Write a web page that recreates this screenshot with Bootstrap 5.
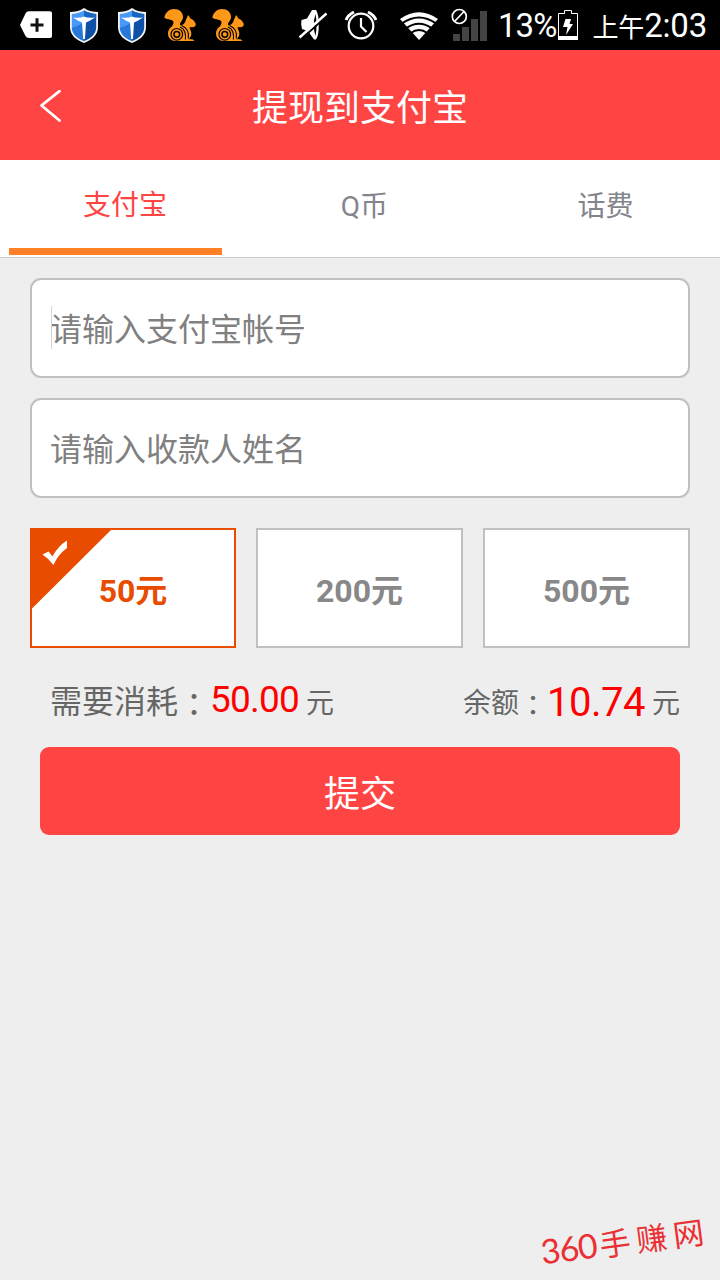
<!DOCTYPE html>
<html lang="zh-CN">
<head>
<meta charset="utf-8">
<meta name="viewport" content="width=device-width, initial-scale=1">
<title>提现到支付宝</title>
<link href="https://cdn.jsdelivr.net/npm/bootstrap@5.3.0/dist/css/bootstrap.min.css" rel="stylesheet">
<script src="https://cdn.jsdelivr.net/npm/bootstrap@5.3.0/dist/js/bootstrap.bundle.min.js"></script>
<style>
  body { font-family: Roboto, "Noto Sans CJK SC", sans-serif; background: #eee; color: #666; line-height: 1; }
  .screen { width: 720px; height: 1280px; overflow: hidden; }
  svg { display: block; flex: none; }
  .status-bar { height: 50px; background: #000; color: #fff; font-size: 33px; padding-left: 12px; white-space: nowrap; }
  .status-bar .battery-text { letter-spacing: -.9px; }
  .status-bar .clock { margin-right: 13px; letter-spacing: -.2px; }
  .ampm { font-size: 26px; }
  .app-header { height: 110px; background: #ff4444; color: #fff; }
  .app-header h1 { font-size: 36px; line-height: 40px; padding-top: 7px; }
  .back-btn { left: 38px; top: 38px; }
  .tabs { height: 98px; background: #fff; border-bottom: 1px solid #ccc; }
  .tabs .tab-item { height: 95px; color: #84848c; font-size: 28px; line-height: 94px; text-align: center; border-bottom: 7px solid transparent; border-radius: 0; padding: 0; }
  .tabs .tab-item.active { color: #ff4444; border-bottom-color: #ff7f27; line-height: 92px; padding-left: 19px; }
  .tabs .tab-cell { padding: 0 9px; }
  .tabs .narrow { width: 231px; }
  .tabs .wide { width: 267px; }
  .tabs .last { width: 222px; padding-left: 2px; }
  .account-form { padding: 20px 30px 0; }
  .field-wrap { margin-bottom: 20px; }
  .field { height: 100px; border: 2px solid #c0c0c0; border-radius: 11px; background: #fff; padding: 4px 19px 0 18px; font-size: 32px; }
  .field::placeholder { color: #808080; opacity: 1; }
  .caret-line { top: 28px; left: 21px; width: 1px; height: 43px; background: #d4d4d4; }
  .amounts { margin-top: 30px; gap: 20px; }
  .amounts .amount { flex: none; width: 207px; height: 120px; border: 2px solid #c0c0c0; background: #fff; color: #888; font-size: 32px; font-weight: 700; border-radius: 0; padding: 5px 0 0; }
  .amounts .amount.active { width: 206px; background: #fff; border-color: #e84c00; color: #e84c00; }
  .corner { left: -2px; top: -2px; }
  .summary { height: 99px; padding: 0 10px 0 20px; }
  .cost, .balance { height: 40px; white-space: nowrap; margin-top: 33px; }
  .cost { font-size: 32px; }
  .cost .val { font-size: 37px; letter-spacing: -.8px; }
  .balance { font-size: 28px; margin-top: 35px; }
  .balance .val { font-size: 40px; letter-spacing: -.5px; }
  .colon { font-family: "Noto Sans CJK TC", sans-serif; position: relative; top: 3px; }
  .red { color: #f00; }
  .unit { font-size: 28px; margin-left: 7px; }
  .cost .lbl, .cost .unit { position: relative; top: 1px; }
  .balance .unit, .balance .lbl { top: -3px; position: relative; }
  .submit-btn { width: 640px; height: 88px; border-radius: 9px; background: #ff4444; color: #fff; font-size: 36px; border: 0; padding: 7px 0 0; }
  .submit-btn:hover { background: #ff4444; color: #fff; }
  .watermark { right: 16px; bottom: 19px; color: #ea3034; transform: rotate(-7.5deg); white-space: nowrap; }
  .wm-num { font: 34px Lato, sans-serif; letter-spacing: -1px; }
  .wm-text { font-size: 31px; font-weight: 400; letter-spacing: 6px; margin-left: 3px; margin-right: -6px; }
</style>
</head>
<body>
<svg width="0" height="0" class="position-absolute" aria-hidden="true">
  <symbol id="shield" viewBox="0 0 48 50">
    <path d="M24 8C20 11 14 12 10 12V27C10 35 16 40 24 43C32 40 38 35 38 27V12C34 12 28 11 24 8Z" fill="#f4f4f4"/>
    <path d="M24 10.500C20 13 15 13.800 11.800 14V27C11.800 34 17 38.500 24 41Z" fill="#479af5"/>
    <path d="M24 10.500C28 13 33 13.800 36.200 14V27C36.200 34 31 38.500 24 41Z" fill="#0d50a5"/>
    <path d="M24 23L11.800 28C12.500 34 17.500 38.700 24 41Z" fill="#2878dc"/>
    <path d="M24 10.500C28 13 33 13.800 36.200 14V18L24 21Z" fill="#1964c2"/>
    <path d="M13 17.500Q20 18.500 24 16.500Q28 18.500 35 17.500Q29 21.500 26 22.500L25 39H23.200L22 22.500Q18 21 13 17.500Z" fill="#fff"/>
  </symbol>
  <symbol id="squirrel" viewBox="0 0 48 50">
    <path d="M8.300 17.500C9.500 12 13.500 9 18 9C23.500 9 27 12.500 27 17C27 20.500 23.500 22.500 24 25C27 26 29.500 22.500 30 19.500L32.200 15L34.500 18.500C38 20 39.800 22.500 39.800 25C39 27.300 36 27.500 33.500 27.300C33.500 29.500 35.500 30.500 35.300 34C35.200 36.500 34 38 32.500 39.300H36.500L38.500 41H19C14.500 40.500 12 37.500 12 33.500C12 27.500 17.500 27 17.500 22.500C17.500 18.500 11.500 20.500 8.300 17.500Z" fill="#ff9819"/>
    <path d="M24 27C28.500 28.500 30.300 34 29.300 39.500M25.500 25.500C30.500 27.500 33.300 32 32.300 38.500" fill="none" stroke="#000" stroke-width="1.100"/>
    <circle cx="20.800" cy="34.300" r="5.800" fill="#ff9819" stroke="#000" stroke-width="1.200"/>
    <circle cx="20.800" cy="34.300" r="2.900" fill="#ff9819" stroke="#000" stroke-width="1.500"/>
  </symbol>
</svg>

<div class="screen position-relative d-flex flex-column">
  <div class="status-bar d-flex align-items-center">
    <svg width="48" height="50" viewBox="0 0 48 50"><path d="M17 11.300H38Q40 11.300 40 13.300V36Q40 38 38 38H17Q14.500 38 13.500 36L8 25L13.500 13.500Q14.500 11.300 17 11.300Z" fill="#fff"/><path d="M18.500 25H31.500M25 18.300V31.700" stroke="#111" stroke-width="3"/></svg>
    <svg width="48" height="50"><use href="#shield"/></svg>
    <svg width="48" height="50"><use href="#shield"/></svg>
    <svg width="48" height="50"><use href="#squirrel"/></svg>
    <svg width="48" height="50"><use href="#squirrel"/></svg>
    <div class="d-flex align-items-center ms-auto">
      <svg width="48" height="50" viewBox="289 0 48 50"><path d="M301.500 20L307 18.500L312 10H316Q318.800 14 318.800 25T316 39.500H314L308 31L302 29Q300.500 24 301.500 20Z" fill="#fff"/><path d="M315.500 14Q312 25 315.500 36Q317.500 25 315.500 14Z" fill="#000"/><path d="M301 39.200L328 15" stroke="#000" stroke-width="2"/><path d="M299.500 37.500L326.500 13.500" stroke="#fff" stroke-width="2.500"/></svg>
      <svg width="58" height="50" viewBox="337 0 58 50" fill="none" stroke="#fff"><circle cx="361" cy="26" r="12.300" stroke-width="2.200"/><path d="M361 18V26.500L366.500 32" stroke-width="2.200"/><path d="M346 20Q348 15 354 12M376 20Q374 15 368 12" stroke-width="3"/></svg>
      <svg width="48" height="50" viewBox="395 0 48 50"><path d="M400 19Q419 5.500 438 19L419 40Z" fill="#fff"/><g fill="none" stroke="#000" stroke-width="2"><path d="M402 23.400Q419 11.500 436 23.400M406 28.400Q419 19 432 28.400M410.500 33.200Q419 27 427.500 33.200"/></g></svg>
      <svg width="55" height="50" viewBox="443 0 55 50"><path d="M453 34h7v7h-7zM462 27h7v14h-7zM471 19h7v22h-7zM480 11h7v30h-7z" fill="#444"/><g fill="none" stroke="#fff" stroke-width="1.700"><circle cx="459.300" cy="16.500" r="7"/><path d="M454.500 21.500L464 11.500"/></g></svg>
      <span class="battery-text">13%</span>
      <svg width="36" height="50" viewBox="557 0 36 50"><path d="M558.500 39V13.500H564.500V10.500H571.500V13.500H577.500V39Z" fill="none" stroke="#fff"/><path d="M558 36H578V40H558Z" fill="#fff"/><path d="M565.500 19H571L569.500 24H573L566 35L567.500 27H563Z" fill="#fff"/></svg>
      <span class="clock"><span class="ampm">上午</span>2:03</span>
    </div>
  </div>

  <header class="app-header position-relative d-flex align-items-center justify-content-center">
    <a class="back-btn position-absolute" href="#" aria-label="返回"><svg width="26" height="36" viewBox="0 0 26 36"><path d="M21.500 3.200L3.500 17.500L21.500 32.500" fill="none" stroke="#fff" stroke-width="2.800" stroke-linecap="round" stroke-linejoin="round"/></svg></a>
    <h1 class="m-0 fw-normal">提现到支付宝</h1>
  </header>

  <nav class="tabs d-flex">
    <div class="tab-cell narrow"><a class="nav-link tab-item active" href="#">支付宝</a></div>
    <div class="tab-cell wide"><a class="nav-link tab-item" href="#">Q币</a></div>
    <div class="tab-cell last"><a class="nav-link tab-item" href="#">话费</a></div>
  </nav>

  <form class="account-form d-flex flex-column">
    <div class="position-relative field-wrap">
      <input class="form-control field" type="text" placeholder="请输入支付宝帐号">
      <span class="caret-line position-absolute"></span>
    </div>
    <input class="form-control field" type="text" placeholder="请输入收款人姓名">

    <div class="amounts d-flex">
      <button type="button" class="btn amount active position-relative">
        <svg class="corner position-absolute" width="83" height="83" viewBox="0 0 83 83"><path d="M0 0H83L0 82.500Z" fill="#e84c00"/><path d="M12.500 26.500L18.500 23.500L22.500 28.500Q28 18 37 12.500V20Q28 26.500 23.500 37Q18 30 12.500 26.500Z" fill="#fff"/></svg>
        <span>50元</span>
      </button>
      <button type="button" class="btn amount"><span>200元</span></button>
      <button type="button" class="btn amount"><span>500元</span></button>
    </div>

    <div class="summary d-flex justify-content-between">
      <div class="cost d-flex align-items-baseline"><span class="lbl">需要消耗<span class="colon" lang="zh-TW">：</span></span><span class="red val">50.00</span><span class="unit">元</span></div>
      <div class="balance d-flex align-items-baseline"><span class="lbl">余额<span class="colon" lang="zh-TW">：</span></span><span class="red val">10.74</span><span class="unit">元</span></div>
    </div>

    <button type="button" class="btn submit-btn mx-auto">提交</button>
  </form>

  <div class="watermark position-absolute d-flex align-items-baseline"><span class="wm-num">360</span><span class="wm-text">手赚网</span></div>
</div>
</body>
</html>
